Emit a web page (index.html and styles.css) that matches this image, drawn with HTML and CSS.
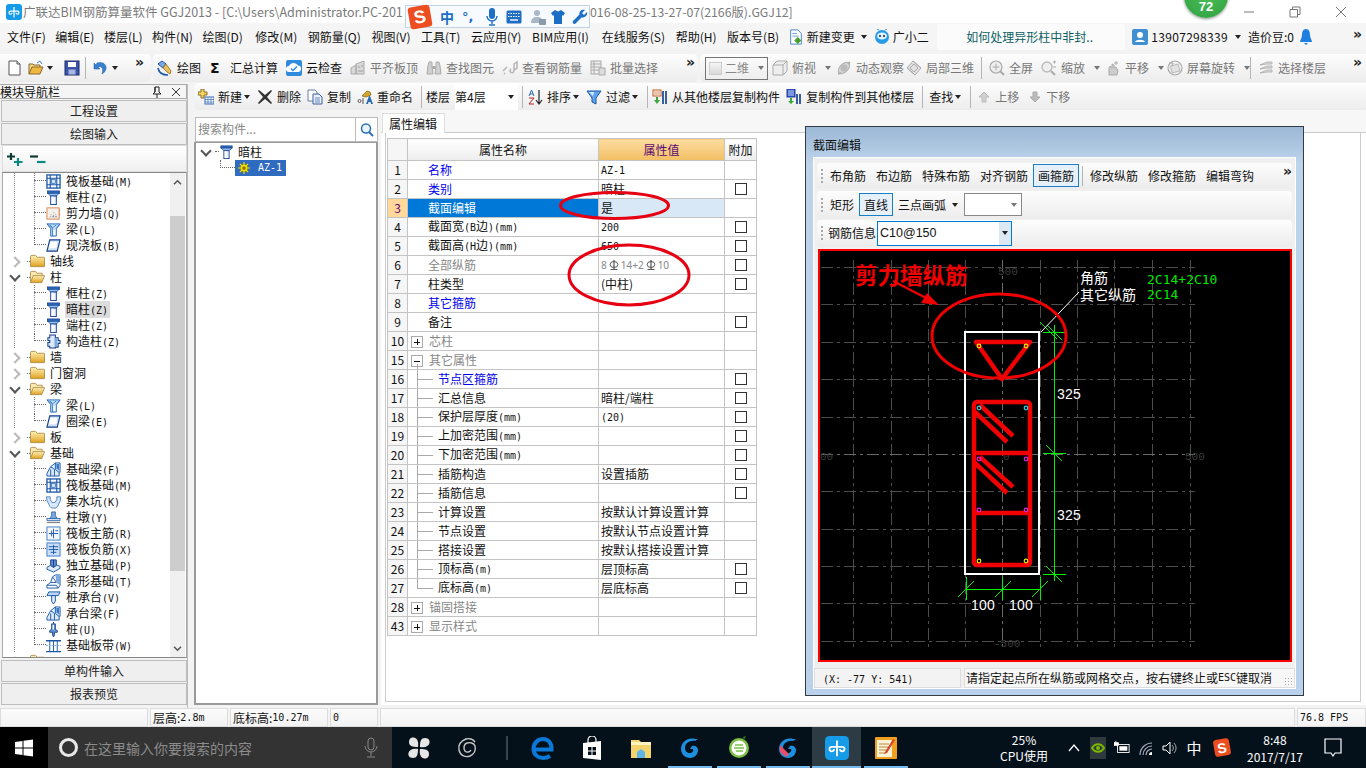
FILE: index.html
```html
<!DOCTYPE html>
<html lang="zh-CN">
<head>
<meta charset="utf-8">
<title>广联达BIM钢筋算量软件 GGJ2013</title>
<link rel="stylesheet" href="styles.css">
</head>
<body>
<svg class="sprite" xmlns="http://www.w3.org/2000/svg">
<defs>
<linearGradient id="gf" x1="0" y1="0" x2="0" y2="1"><stop offset="0" stop-color="#fff3b8"/><stop offset="1" stop-color="#e0a020"/></linearGradient>
<symbol id="i-col" viewBox="0 0 16 16"><rect x="1.5" y="1" width="13" height="2.5" fill="#2f6fc4" stroke="#143d8a" stroke-width=".8"/><path d="M2 3.5h12l-3 3H5z" fill="#8fbdf0" stroke="#143d8a" stroke-width=".8"/><rect x="5" y="6.5" width="6" height="9" fill="#e8f2ff" stroke="#143d8a"/><rect x="6" y="7" width="2" height="8" fill="#fff"/></symbol>
<symbol id="i-raft" viewBox="0 0 16 16"><rect x="1" y="1" width="14" height="14" fill="#fff" stroke="#1a57a6" stroke-width="1.4"/><path d="M4.5 1v14M11.5 1v14M1 4.5h14M1 11.5h14" stroke="#1a57a6" stroke-width="1.2"/><rect x="6" y="6" width="4" height="4" fill="#cfe0f5" stroke="#1a57a6" stroke-width=".7"/></symbol>
<symbol id="i-wall" viewBox="0 0 16 16"><rect x="1" y="2" width="13" height="12" fill="#f4f0ec" stroke="#d9814a"/><path d="M3 12l2-1 1 1 2-3 1 3 2-2 1 2zM5 8l1 1-1 1zM8 6l1 1-1 1zM10 8l1 1-1 1z" fill="#9a9a9a"/><path d="M14.500 4v2M14.500 8v2" stroke="#d9814a"/></symbol>
<symbol id="i-beam" viewBox="0 0 16 16"><path d="M1 2h14l-4 5v8H5V7z" fill="#bcdcf8" stroke="#2a6db5"/><path d="M1 2l6 5v8M11 7l4-5M4 3l3 3 4-3" fill="none" stroke="#2a6db5" stroke-width=".8"/><path d="M8 8h2v6H8z" fill="#fff"/></symbol>
<symbol id="i-slab" viewBox="0 0 16 16"><path d="M4 2h11l-3 12H1z" fill="#cfe2fa" stroke="#143d8a" stroke-width="1.2"/><path d="M5 4h7l-1 7H3z" fill="#fff"/></symbol>
<symbol id="i-gcol" viewBox="0 0 16 16"><path d="M4 1h6v3h3v3h2v3h-2v4h-3v1H4v-2H2V9h2V7H2V4h2z" fill="#dbe9fb" stroke="#143d8a" stroke-width="1.1"/><path d="M9 4h3v9H9z" fill="#7ea9de"/></symbol>
<symbol id="i-fbeam" viewBox="0 0 16 16"><path d="M1 15v-3l4-7 5-4h5v10h-1v4z" fill="#dbe9fb" stroke="#1a57a6"/><path d="M10 1v7l4 3M5 5l4 3v7M5 15V8" fill="none" stroke="#1a57a6"/><path d="M11 2h3v7l-3-2z" fill="#3a7cc8"/></symbol>
<symbol id="i-sump" viewBox="0 0 16 16"><path d="M.5 3h4v3l2 3h3l2-3V3h4v4l-3 6-2 2H6l-2-2-3-6z" fill="#cfe2fa" stroke="#2a6db5" stroke-width=".8"/><path d="M4 11h8M5 13h6" stroke="#fff" stroke-dasharray="1 1"/></symbol>
<symbol id="i-pier" viewBox="0 0 16 16"><path d="M6 2h4v4l2 3H4l2-3z" fill="#7ea9de" stroke="#1a57a6" stroke-width=".8"/><rect x="1" y="9" width="14" height="2" fill="#dbe9fb" stroke="#1a57a6" stroke-width=".8"/><rect x="1" y="12.500" width="14" height="1.500" fill="#888"/></symbol>
<symbol id="i-rmain" viewBox="0 0 16 16"><rect x="1" y="1" width="14" height="14" fill="#f2f7fe" stroke="#3a7cc8"/><path d="M3 8h10M8 3v10M6 5v6M10 5h3" stroke="#1a57a6" fill="none"/></symbol>
<symbol id="i-rneg" viewBox="0 0 16 16"><rect x="1" y="1" width="14" height="14" fill="#c9ddf6" stroke="#3a7cc8"/><path d="M3 8h10M3 5h10M8 3v10M5 11h6" stroke="#1a57a6" fill="none"/></symbol>
<symbol id="i-iso" viewBox="0 0 16 16"><path d="M1 10l7-4 7 3v2l-7 4-7-3z" fill="#dbe9fb" stroke="#1a57a6"/><path d="M5 2h6v6l-3 2-3-2z" fill="#5d90d2" stroke="#143d8a"/><path d="M8 2v8" stroke="#143d8a"/></symbol>
<symbol id="i-strip" viewBox="0 0 16 16"><path d="M1 15v-3l4-3 2-6 3-2h5v11l-2 3z" fill="#fff" stroke="#1a57a6"/><path d="M1 12h10l2 3M5 9h6M7 3l4 6" fill="none" stroke="#1a57a6"/><path d="M10 1h5v11l-4-3z" fill="#7ea9de"/></symbol>
<symbol id="i-cap" viewBox="0 0 16 16"><path d="M3 2h12l-2 4H1z" fill="#bcd6f5" stroke="#1a57a6"/><path d="M6 6h4v6l-2 3-2-3z" fill="#dbe9fb" stroke="#1a57a6"/></symbol>
<symbol id="i-pile" viewBox="0 0 16 16"><path d="M8 0v2M6 2h4v6l2 1v2H9v3l-1 2-1-2v-3H4V9l2-1z" fill="#5d90d2" stroke="#143d8a" stroke-width=".9"/><rect x="7" y="3" width="1.500" height="5" fill="#fff"/></symbol>
<symbol id="i-band" viewBox="0 0 16 16"><path d="M0 3h16M0 14.500h16" stroke="#1a57a6" stroke-width="1.500"/><path d="M4 3v11M8 3v11M12 3v11" stroke="#1a57a6"/><path d="M0 8h16" stroke="#7ea9de" stroke-dasharray="2 1"/></symbol>
<symbol id="i-fold" viewBox="0 0 16 14"><path d="M.5 2.500Q.5 1 2 1h4l1.500 2H15q.5 0 .5.5V13H.5z" fill="url(#gf)" stroke="#b09350"/></symbol>
<symbol id="i-open" viewBox="0 0 16 14"><path d="M.5 13V2.500Q.5 1 2 1h4l1.500 2H13v2" fill="#f7e6b0" stroke="#b09350"/><path d="M3.500 5.500H15.500L12.500 13H.5z" fill="url(#gf)" stroke="#b09350"/></symbol>
<symbol id="i-az" viewBox="0 0 16 16"><circle cx="8" cy="8" r="5" fill="#ffe500" stroke="#6a6000"/><path d="M8 0v16M0 8h16M2.500 2.500l11 11M13.500 2.500l-11 11" stroke="#ffe500" stroke-width="1.500"/><circle cx="8" cy="8" r="2.500" fill="#8a7a00"/></symbol>
<symbol id="i-doc" viewBox="0 0 16 16"><path d="M2 1h8l3 3v11H2z" fill="#fff" stroke="#555"/><path d="M10 1v3h3" fill="#ddd" stroke="#555"/></symbol>
<symbol id="i-openf" viewBox="0 0 16 16"><path d="M1 14V4h4l1 1h6v2" fill="#f2d78a" stroke="#8a6a2a"/><path d="M1 14l3-7h11l-3 7z" fill="#f0b840" stroke="#8a6a2a"/><path d="M9 3l3-2 2 3" fill="none" stroke="#3a7cc8"/></symbol>
<symbol id="i-save" viewBox="0 0 16 16"><rect x="1" y="1" width="14" height="14" fill="#3b53a8" stroke="#1d2a66"/><rect x="4" y="2" width="8" height="5" fill="#fff"/><rect x="4.500" y="9.500" width="7" height="5" fill="#a8b6e2"/></symbol>
<symbol id="i-undo" viewBox="0 0 16 16"><path d="M4 3c6-2 10 2 9 6-.6 2-2 4-4 5 1-3 1-6-1-7-1-.5-2-.3-3 .3L7 9H1V3l2 2z" fill="#3b80cf" stroke="#1d5aa0" stroke-width=".5"/></symbol>
<symbol id="i-draw" viewBox="0 0 16 16"><path d="M1 4l4-3 4 3-3 4z" fill="#7ea9de" stroke="#1a57a6"/><path d="M6 8l3-4 5 7-1 3-3-2z" fill="#e8c25a" stroke="#8a6a2a" stroke-width=".8"/><path d="M1 8c1 5 5 7 10 7" fill="none" stroke="#1a57a6" stroke-width="1.600"/></symbol>
<symbol id="i-cloud" viewBox="0 0 16 16"><rect width="16" height="16" rx="2" fill="#2f8be0"/><path d="M3 12a3 3 0 0 1 0-6 5 5 0 0 1 9-.5A3.300 3.300 0 0 1 12.500 12z" fill="#fff"/><path d="M5 8.500l2 2 4-4" fill="none" stroke="#2f8be0" stroke-width="1.500"/></symbol>
<symbol id="i-align" viewBox="0 0 16 16"><path d="M1 14V8l5-3v9zM6 14V4l8-3v13z" fill="#d8d8d8" stroke="#aaa"/><path d="M8 6h2v2H8zM11 5h2v2h-2zM8 10h5v2H8z" fill="#bbb"/></symbol>
<symbol id="i-bino" viewBox="0 0 16 16"><path d="M2 6l1-4h3v4l1 8H1zM14 6l-1-4h-3v4l-1 8h6z" fill="#d0d0d0" stroke="#aaa"/><rect x="6.500" y="6" width="3" height="3" fill="#aaa"/></symbol>
<symbol id="i-rlook" viewBox="0 0 16 16"><path d="M1 11l4-4M3 13l-1 1M12 4l3-2v6l-3 2zM9 9a2 2 0 1 0 3 2" fill="none" stroke="#b5b5b5" stroke-width="1.500"/></symbol>
<symbol id="i-batch" viewBox="0 0 16 16"><rect x="1" y="1" width="10" height="13" fill="#eee" stroke="#aaa"/><path d="M1 4h10M1 7h10M1 10h10M4 1v13" stroke="#aaa"/><path d="M9 8h6v7H9z" fill="#ddd" stroke="#aaa"/></symbol>
<symbol id="i-cube" viewBox="0 0 16 16"><path d="M1 5l4-4h10v10l-4 4H1z" fill="#eee" stroke="#aaa"/><path d="M1 5h10v10M11 5l4-4" fill="none" stroke="#aaa"/></symbol>
<symbol id="i-orbit" viewBox="0 0 16 16"><ellipse cx="8" cy="8" rx="7" ry="4" transform="rotate(-45 8 8)" fill="#d5d5d5" stroke="#b0b0b0"/><circle cx="8" cy="8" r="3.500" fill="#bbb"/><path d="M2 14l3-1M14 2l-2 2" stroke="#aaa" stroke-width="1.500"/></symbol>
<symbol id="i-l3d" viewBox="0 0 16 16"><path d="M1 8l6-7 8 7-6 7z" fill="#e2e2e2" stroke="#aaa"/><path d="M4 8l4-4 4 4-4 4zM1 8l8 7M7 1l8 7" fill="none" stroke="#aaa"/></symbol>
<symbol id="i-full" viewBox="0 0 16 16"><circle cx="7" cy="7" r="6" fill="#efefef" stroke="#aaa" stroke-width="1.200"/><path d="M3.500 7h7M7 3.500v7" stroke="#aaa"/><path d="M11 11l4 4" stroke="#aaa" stroke-width="2"/></symbol>
<symbol id="i-zoom" viewBox="0 0 16 16"><circle cx="6" cy="7" r="5" fill="#efefef" stroke="#bbb" stroke-width="1.400"/><path d="M10 11l4 4" stroke="#aaa" stroke-width="2"/><path d="M12 2h3M13.500.5v3M12 7h3" stroke="#aaa"/></symbol>
<symbol id="i-pan" viewBox="0 0 16 16"><path d="M4 15V8l1-2 2 2V4l2 1v3l2-1 1 2 1 1-1 5z" fill="#ccc" stroke="#aaa"/><path d="M11 1v4M9 3h4" stroke="#aaa"/></symbol>
<symbol id="i-rot" viewBox="0 0 16 16"><circle cx="8" cy="8" r="7" fill="#f0f0f0" stroke="#aaa" stroke-width="1.200"/><rect x="4" y="5" width="8" height="7" fill="#e2e2e2" stroke="#bbb" transform="rotate(-15 8 8)"/><path d="M2 3l4 0-1 3" fill="none" stroke="#aaa"/></symbol>
<symbol id="i-floors" viewBox="0 0 16 16"><path d="M2 5l7-3h5v2H9zM2 9l7-3h5v2H9zM2 13l7-3h5v2H9z" fill="#ddd" stroke="#aaa" stroke-width=".8"/></symbol>
<symbol id="i-new" viewBox="0 0 16 16"><path d="M3 0h3v3h3v3H6v3H3V6H0V3h3z" fill="#f4d65c" stroke="#8a6a2a"/><rect x="7" y="8" width="9" height="7" fill="#fff" stroke="#3a6db5"/><path d="M7 10.500h9M7 13h9M10 8v7M13 8v7" stroke="#3a6db5" stroke-width=".7"/></symbol>
<symbol id="i-del" viewBox="0 0 16 16"><path d="M2 1l6 5 6-5 1 1-5 6 5 6-1 1-6-5-6 5-1-1 5-6-5-6z" fill="#333"/></symbol>
<symbol id="i-copy" viewBox="0 0 16 16"><path d="M1 1h7l2 2v9H1z" fill="#fff" stroke="#6a7fa8"/><path d="M6 5h6l3 3v7H6z" fill="#e8effa" stroke="#3a5fa0"/><path d="M8 9h5M8 11h5M8 13h5" stroke="#3a5fa0" stroke-width=".7"/></symbol>
<symbol id="i-ren" viewBox="0 0 16 16"><path d="M5 7l5-5 3 1 1 3-5 2z" fill="#d4a72c" stroke="#7a5d10" stroke-width=".7"/><path d="M9 15l3-8h1l3 8h-2l-.5-2h-2l-.5 2z" fill="#2a6db5"/><path d="M1 12a1.500 1.500 0 1 0 3 0 1.500 1.500 0 1 0-3 0M6 9v6" fill="none" stroke="#555"/></symbol>
<symbol id="i-sort" viewBox="0 0 16 16"><path d="M12 1v13M9 11l3 4 3-4" fill="none" stroke="#222" stroke-width="1.200"/><path d="M2 7l2.500-6 2.500 6M3 5h3" fill="none" stroke="#2a6db5"/><path d="M2 9h5l-5 6h5" fill="none" stroke="#c02020"/></symbol>
<symbol id="i-filter" viewBox="0 0 16 16"><path d="M1 2h14l-5 7v6l-4-2V9z" fill="#63a4ea" stroke="#1a57a6"/><path d="M3 3h5l-1 4z" fill="#d7ecff"/></symbol>
<symbol id="i-cfrom" viewBox="0 0 16 16"><rect x="1" y="1" width="8" height="6" fill="#fff" stroke="#c05a20"/><path d="M2 3h6M2 5h6" stroke="#c05a20" stroke-width=".7"/><path d="M4 8v3H2l3 4 3-4H6V8z" fill="#3aa83a"/><path d="M10 2h2v13h-2zM13 2h2v13h-2z" fill="#3a5fa0"/></symbol>
<symbol id="i-cto" viewBox="0 0 16 16"><rect x="1" y="0" width="8" height="8" fill="#3a5fd0" stroke="#1a3a90"/><path d="M2 2h6M2 4h6M2 6h6" stroke="#fff" stroke-width=".7"/><path d="M4 9v3H2l3 3 3-3H6V9z" fill="#3aa83a"/><path d="M10 5h2v10h-2zM13 5h2v10h-2z" fill="#3a5fa0"/></symbol>
<symbol id="i-up" viewBox="0 0 12 12"><path d="M6 1l5 5H8v5H4V6H1z" fill="#d0d0d0" stroke="#bbb"/></symbol>
<symbol id="i-down" viewBox="0 0 12 12"><path d="M6 11L1 6h3V1h4v5h3z" fill="#bbb" stroke="#aaa"/></symbol>
<symbol id="i-logo" viewBox="0 0 16 16"><rect width="16" height="16" rx="3" fill="#159be8"/><path d="M8 3v10.500M8 7.200H4.500a1.500 1.500 0 1 0 1.500 1.500M8 7.200h3.500a1.500 1.500 0 1 1-1.500 1.500" fill="none" stroke="#fff" stroke-width="1.200"/></symbol>
<symbol id="i-mdoc" viewBox="0 0 16 18"><path d="M2 1h8l4 4v12H2z" fill="#fff" stroke="#3a7cc8"/><path d="M4 5h5M4 8h7" stroke="#3a7cc8" stroke-width=".8"/><path d="M10 9l4 4-4 4-4-4z" fill="#4aa02c"/></symbol>
<symbol id="i-xiao" viewBox="0 0 16 16"><circle cx="8" cy="8" r="7" fill="#2a9be6"/><ellipse cx="8" cy="7" rx="5" ry="3.500" fill="#dff2ff"/><circle cx="6" cy="7" r="1" fill="#123"/><circle cx="10" cy="7" r="1" fill="#123"/><path d="M5 1L3 0M11 1l2-1" stroke="#2a9be6"/></symbol>
<symbol id="i-user" viewBox="0 0 16 16"><rect width="16" height="16" rx="2" fill="#3f8fd2"/><circle cx="8" cy="6" r="3" fill="#fff"/><path d="M3 13c1-3 9-3 10 0z" fill="#fff"/></symbol>
<symbol id="i-bell" viewBox="0 0 12 16"><path d="M6 0c3 0 4 3 4 6 0 3 2 5 2 7H0c0-2 2-4 2-7 0-3 1-6 4-6z" fill="#1f7fe0"/><path d="M4 14h4l-2 2z" fill="#1f7fe0"/></symbol>
<symbol id="i-search" viewBox="0 0 16 16"><circle cx="7" cy="6.500" r="4.500" fill="#e8f3ff" stroke="#2a6db5" stroke-width="1.500"/><path d="M10 10l4 4" stroke="#2a6db5" stroke-width="2"/></symbol>
<symbol id="i-rb" viewBox="0 0 10 10"><ellipse cx="5" cy="4.500" rx="3.800" ry="3" fill="none" stroke="#555"/><path d="M5 0v9M1.500 9.500h7" stroke="#555" stroke-width="1.200"/></symbol>
<symbol id="i-ime-mic" viewBox="0 0 12 18"><rect x="3" y="0" width="6" height="11" rx="3" fill="#1c6fc4"/><path d="M1 8a5 5 0 0 0 10 0M6 13v3M3 17h6" fill="none" stroke="#1c6fc4" stroke-width="1.400"/></symbol>
<symbol id="i-ime-kb" viewBox="0 0 16 14"><rect x=".5" y=".5" width="15" height="13" rx="1.500" fill="#1c6fc4"/><path d="M2 3.500h12M2 6.500h12" stroke="#fff" stroke-dasharray="1.500 1" /><path d="M4 10h8" stroke="#fff" stroke-width="1.400"/></symbol>
<symbol id="i-ime-user" viewBox="0 0 16 16"><circle cx="7" cy="4" r="3" fill="#a9b7c6"/><path d="M1 14c0-5 3-6 6-6s6 1 6 6z" fill="#a9b7c6"/><rect x="9" y="10" width="7" height="6" rx="1" fill="#8b9aa9"/></symbol>
<symbol id="i-ime-shirt" viewBox="0 0 14 14"><path d="M4 0l3 1.500L10 0l4 3-2 3-1-1v9H3V5L2 6 0 3z" fill="#1c6fc4"/></symbol>
<symbol id="i-ime-wr" viewBox="0 0 16 16"><path d="M15 3l-3 3-2-2 3-3c-3-1-6 1-5.500 4.500L1 12c-1 1 0 3 2 3l6.500-6.500C13 9 16 6 15 3z" fill="#1c6fc4"/></symbol>
<symbol id="i-win" viewBox="0 0 18 18"><path d="M0 3l7.500-1v6.500H0zM8.500 1.800L18 .5v8H8.500zM0 9.500h7.500V16L0 15zM8.500 9.500H18v8l-9.500-1.300z" fill="#fff"/></symbol>
<symbol id="i-mic" viewBox="0 0 14 22"><rect x="4" y="1" width="6" height="12" rx="3" fill="none" stroke="#888"/><path d="M1 9a6 6 0 0 0 12 0M7 15v4M3 20h8" fill="none" stroke="#888"/></symbol>
<symbol id="i-pin" viewBox="0 0 24 24"><path d="M11 11C5 11 2 10 2 6s3-5 5-4.500c3 .7 5 4 4 9.500zM13 11c0-6 1-9 5-9s5 3 4.500 5c-.7 3-4 5-9.500 4zM13 13c6 0 9 1 9 5s-3 5-5 4.500c-3-.7-5-4-4-9.500zM11 13c0 6-1 9-5 9s-5-3-4.500-5c.7-3 4-5 9.500-4z" fill="#e6e6e6"/></symbol>
<symbol id="i-swirl" viewBox="0 0 24 24"><path d="M19 6c-2-3-6-4-9-3C5 5 2 9 3 14c1 5 6 8 11 6 4-2 6-6 5-10-1-3-5-4-8-3-3 1-4 5-2 8 2 2 5 1 6-1" fill="none" stroke="#c8c8c8" stroke-width="1.400"/></symbol>
<symbol id="i-edge" viewBox="0 0 24 24"><path d="M3 13.500h17.500c.5-6-3-10.500-8.500-10.500-5 0-9.500 4-9.500 10 0 6 5 9 9.500 9 2.500 0 5-.7 7-2" fill="none" stroke="#0a78d7" stroke-width="4"/></symbol>
<symbol id="i-store" viewBox="0 0 24 24"><path d="M3 7l18-2v19L3 22z" fill="#fff"/><path d="M8 7V4a4 4 0 0 1 8 0v3" fill="none" stroke="#fff" stroke-width="1.200"/><path d="M8 11h3.500v3.500H8zM12.500 11H16v3.500h-3.500zM8 15.500h3.500V19H8zM12.500 15.500H16V19h-3.500z" fill="#04111a"/></symbol>
<symbol id="i-folder" viewBox="0 0 24 24"><path d="M2 4h8l2 2h10v16H2z" fill="#f3d36b"/><rect x="2" y="6" width="20" height="3" fill="#fff3c0"/><path d="M8 22v-6l4-3 4 3v6z" fill="#5cb4e8"/></symbol>
<symbol id="i-gapp" viewBox="0 0 24 24"><path d="M17 3C10 1 3 6 3 13c0 5 4 9 9 9s8-4 8-8c0-3-3-5-6-4l-2 3 3 0c1 2-1 4-3 4-3 0-5-2-5-5 0-5 5-8 10-7l3-2z" fill="#1d8fe0"/></symbol>
<symbol id="i-gr" viewBox="0 0 24 24"><circle cx="12" cy="12" r="10" fill="#7bc043"/><circle cx="12" cy="12" r="7.500" fill="#fff"/><path d="M7 12h10M8 9h8M9 15h7" stroke="#7bc043" stroke-width="1.500"/><path d="M16 1l3-1-2 4z" fill="#2a7a20"/></symbol>
<symbol id="i-gred" viewBox="0 0 24 24"><path d="M17 3C10 1 3 6 3 13c0 5 4 9 9 9s8-4 8-8c0-3-3-5-6-4l-2 3 3 0c1 2-1 4-3 4-3 0-5-2-5-5 0-5 5-8 10-7l3-2z" fill="#1d8fe0"/><path d="M4 9l9 9-3 3-6-5z" fill="#e8506a"/></symbol>
<symbol id="i-note" viewBox="0 0 24 24"><rect x="1" y="1" width="22" height="22" rx="1" fill="#f0a01e"/><rect x="3" y="4" width="15" height="17" fill="#fbf3d8"/><path d="M5 8h10M5 11h10M5 14h8M5 17h6" stroke="#b58a3a"/><path d="M11 16l8-13 2 1-8 13-3 1z" fill="#d8452a"/></symbol>
<symbol id="i-nv" viewBox="0 0 16 22"><rect width="16" height="22" fill="#2e3a3e"/><path d="M2 11c3-5 9-5 12 0-3 5-9 5-12 0z" fill="none" stroke="#7cb800" stroke-width="2"/><circle cx="8" cy="11" r="2" fill="#7cb800"/></symbol>
<symbol id="i-batt" viewBox="0 0 18 16"><rect x="4" y="4" width="13" height="9" fill="none" stroke="#fff"/><rect x="6" y="6" width="9" height="5" fill="#fff"/><path d="M0 2h5v3H0zM2 0v2" stroke="#fff" fill="#fff"/></symbol>
<symbol id="i-wifi" viewBox="0 0 16 16"><path d="M2 15a12 12 0 0 1 12-12M5 15a9 9 0 0 1 9-9M8 15a6 6 0 0 1 6-6" fill="none" stroke="#aab" stroke-width="1.200"/><path d="M11 15a3 3 0 0 1 3-3v3z" fill="#fff"/></symbol>
<symbol id="i-vol" viewBox="0 0 16 16"><path d="M1 6h3l4-4v12l-4-4H1z" fill="none" stroke="#fff"/><path d="M10 5a4 4 0 0 1 0 6M12 3a7 7 0 0 1 0 10" fill="none" stroke="#aaa"/></symbol>
<symbol id="i-note2" viewBox="0 0 18 20"><path d="M1 1h16v14h-6l-2 3-2-3H1z" fill="none" stroke="#fff" stroke-width="1.200"/></symbol>
</defs>
</svg>

<header class="titlebar">
  <svg class="ic16 tlogo"><use href="#i-logo"/></svg>
  <span class="title-a">广联达BIM钢筋算量软件 GGJ2013 - [C:\Users\Administrator.PC-201</span>
  <span class="title-b">016-08-25-13-27-07(2166版).GGJ12]</span>
  <div class="winctl">
    <svg class="wc" viewBox="0 0 12 12"><path d="M1 6h10"/></svg>
    <svg class="wc" viewBox="0 0 12 12"><path d="M1 3.500h7.500V11H1zM3.500 3.500V1H11v7.500H8.500"/></svg>
    <svg class="wc" viewBox="0 0 12 12"><path d="M1 1l10 10M11 1L1 11"/></svg>
  </div>
</header>

<nav class="menubar">
  <span class="m">文件(F)</span><span class="m">编辑(E)</span><span class="m">楼层(L)</span><span class="m">构件(N)</span><span class="m">绘图(D)</span><span class="m">修改(M)</span><span class="m">钢筋量(Q)</span><span class="m">视图(V)</span><span class="m">工具(T)</span><span class="m">云应用(Y)</span><span class="m">BIM应用(I)</span><span class="m">在线服务(S)</span><span class="m">帮助(H)</span><span class="m">版本号(B)</span>
  <svg class="ic16 mi mi-a"><use href="#i-mdoc"/></svg><span class="m bdd">新建变更</span><i class="dd"></i>
  <svg class="ic16 mi2"><use href="#i-xiao"/></svg><span class="m">广小二</span>
  <span class="ask">如何处理异形柱中非封..</span>
  <svg class="ic16 mi"><use href="#i-user"/></svg><span class="m phone">13907298339</span><i class="dd"></i><span class="m bean">造价豆:0</span>
  <svg class="bell"><use href="#i-bell"/></svg>
  <span class="more more-end">»</span>
</nav>

<div class="tb1">
  <div class="grp g1">
    <svg class="ic16"><use href="#i-doc"/></svg>
    <svg class="ic16 gap5"><use href="#i-openf"/></svg><i class="dd"></i>
    <svg class="ic16 gap10"><use href="#i-save"/></svg>
    <b class="sep"></b>
    <svg class="ic16"><use href="#i-undo"/></svg><i class="dd"></i>
    <span class="more">»</span>
  </div>
  <div class="grp g2">
    <span class="t"><svg class="ic16"><use href="#i-draw"/></svg>绘图</span>
    <span class="t"><span class="sigma">Σ</span>汇总计算</span>
    <span class="t"><svg class="ic16"><use href="#i-cloud"/></svg>云检查</span>
    <span class="t off"><svg class="ic16"><use href="#i-align"/></svg>平齐板顶</span>
    <span class="t off"><svg class="ic16"><use href="#i-bino"/></svg>查找图元</span>
    <span class="t off"><svg class="ic16"><use href="#i-rlook"/></svg>查看钢筋量</span>
    <span class="t off"><svg class="ic16"><use href="#i-batch"/></svg>批量选择</span>
    <span class="more">»</span>
  </div>
  <div class="grp g3">
    <span class="combo2d"><b class="sq"></b>二维<i class="dd gr"></i></span>
    <span class="t off mr4"><svg class="ic16"><use href="#i-cube"/></svg>俯视<i class="dd gr"></i></span>
    <span class="t off mr2"><svg class="ic16"><use href="#i-orbit"/></svg>动态观察</span>
    <span class="t off"><svg class="ic16"><use href="#i-l3d"/></svg>局部三维</span>
    <b class="sep"></b>
    <span class="t off"><svg class="ic16"><use href="#i-full"/></svg>全屏</span>
    <span class="t off mr4"><svg class="ic16"><use href="#i-zoom"/></svg>缩放<i class="dd gr"></i></span>
    <span class="t off mr2"><svg class="ic16"><use href="#i-pan"/></svg>平移<i class="dd gr"></i></span>
    <span class="t off mr0"><svg class="ic16"><use href="#i-rot"/></svg>屏幕旋转<i class="dd gr"></i></span>
    <b class="sep"></b>
    <span class="t off"><svg class="ic16"><use href="#i-floors"/></svg>选择楼层</span>
    <span class="more">»</span>
  </div>
</div>

<div class="workspace">
  <aside class="nav">
    <div class="navhead"><span>模块导航栏</span><span class="navbtns"><svg class="pin" viewBox="0 0 10 12"><path d="M3 1h4v5l2 2H1l2-2zM5 8v4M3 1v5" fill="none" stroke="#222"/></svg><svg class="pin" viewBox="0 0 10 12"><path d="M1 2l8 8M9 2l-8 8" stroke="#333"/></svg></span></div>
    <div class="nbtn">工程设置</div>
    <div class="nbtn">绘图输入</div>
    <div class="xbar">
      <svg class="xi" viewBox="0 0 16 14"><path d="M4 1v7M0 4.500h8" stroke="#0f3b35" stroke-width="2.200"/><path d="M11 6v8M7 10h8.500" stroke="#0a8a80" stroke-width="2.200"/></svg>
      <svg class="xi" viewBox="0 0 16 14"><path d="M0 4.500h8" stroke="#0f3b35" stroke-width="2.200"/><path d="M7 10h8.500" stroke="#0a8a80" stroke-width="2.200"/></svg>
    </div>
    <div class="treebox">
      <div class="tree">
        <div class="c"><b class="k"></b><svg class="ic14"><use href="#i-raft"/></svg><span>筏板基础<i class="l">(M)</i></span></div>
        <div class="c"><b class="k"></b><svg class="ic14"><use href="#i-col"/></svg><span>框柱<i class="l">(Z)</i></span></div>
        <div class="c"><b class="k"></b><svg class="ic14"><use href="#i-wall"/></svg><span>剪力墙<i class="l">(Q)</i></span></div>
        <div class="c"><b class="k"></b><svg class="ic14"><use href="#i-beam"/></svg><span>梁<i class="l">(L)</i></span></div>
        <div class="c last"><b class="k"></b><svg class="ic14"><use href="#i-slab"/></svg><span>现浇板<i class="l">(B)</i></span></div>
        <div class="f"><i class="chev"></i><b class="k2"></b><svg class="ic15"><use href="#i-fold"/></svg><span>轴线</span></div>
        <div class="f"><i class="chev open"></i><b class="k2"></b><svg class="ic15"><use href="#i-open"/></svg><span>柱</span></div>
        <div class="c"><b class="k"></b><svg class="ic14"><use href="#i-col"/></svg><span>框柱<i class="l">(Z)</i></span></div>
        <div class="c"><b class="k"></b><svg class="ic14"><use href="#i-col"/></svg><span class="sel">暗柱<i class="l">(Z)</i></span></div>
        <div class="c"><b class="k"></b><svg class="ic14"><use href="#i-col"/></svg><span>端柱<i class="l">(Z)</i></span></div>
        <div class="c last"><b class="k"></b><svg class="ic14"><use href="#i-gcol"/></svg><span>构造柱<i class="l">(Z)</i></span></div>
        <div class="f"><i class="chev"></i><b class="k2"></b><svg class="ic15"><use href="#i-fold"/></svg><span>墙</span></div>
        <div class="f"><i class="chev"></i><b class="k2"></b><svg class="ic15"><use href="#i-fold"/></svg><span>门窗洞</span></div>
        <div class="f"><i class="chev open"></i><b class="k2"></b><svg class="ic15"><use href="#i-open"/></svg><span>梁</span></div>
        <div class="c"><b class="k"></b><svg class="ic14"><use href="#i-beam"/></svg><span>梁<i class="l">(L)</i></span></div>
        <div class="c last"><b class="k"></b><svg class="ic14"><use href="#i-slab"/></svg><span>圈梁<i class="l">(E)</i></span></div>
        <div class="f"><i class="chev"></i><b class="k2"></b><svg class="ic15"><use href="#i-fold"/></svg><span>板</span></div>
        <div class="f"><i class="chev open"></i><b class="k2"></b><svg class="ic15"><use href="#i-open"/></svg><span>基础</span></div>
        <div class="c"><b class="k"></b><svg class="ic14"><use href="#i-fbeam"/></svg><span>基础梁<i class="l">(F)</i></span></div>
        <div class="c"><b class="k"></b><svg class="ic14"><use href="#i-raft"/></svg><span>筏板基础<i class="l">(M)</i></span></div>
        <div class="c"><b class="k"></b><svg class="ic14"><use href="#i-sump"/></svg><span>集水坑<i class="l">(K)</i></span></div>
        <div class="c"><b class="k"></b><svg class="ic14"><use href="#i-pier"/></svg><span>柱墩<i class="l">(Y)</i></span></div>
        <div class="c"><b class="k"></b><svg class="ic14"><use href="#i-rmain"/></svg><span>筏板主筋<i class="l">(R)</i></span></div>
        <div class="c"><b class="k"></b><svg class="ic14"><use href="#i-rneg"/></svg><span>筏板负筋<i class="l">(X)</i></span></div>
        <div class="c"><b class="k"></b><svg class="ic14"><use href="#i-iso"/></svg><span>独立基础<i class="l">(P)</i></span></div>
        <div class="c"><b class="k"></b><svg class="ic14"><use href="#i-strip"/></svg><span>条形基础<i class="l">(T)</i></span></div>
        <div class="c"><b class="k"></b><svg class="ic14"><use href="#i-cap"/></svg><span>桩承台<i class="l">(V)</i></span></div>
        <div class="c"><b class="k"></b><svg class="ic14"><use href="#i-fbeam"/></svg><span>承台梁<i class="l">(F)</i></span></div>
        <div class="c"><b class="k"></b><svg class="ic14"><use href="#i-pile"/></svg><span>桩<i class="l">(U)</i></span></div>
        <div class="c last"><b class="k"></b><svg class="ic14"><use href="#i-band"/></svg><span>基础板带<i class="l">(W)</i></span></div>
        <div class="f"><i class="chev"></i><b class="k2"></b><svg class="ic15"><use href="#i-fold"/></svg></div>
      </div>
      <div class="vscroll">
        <span class="sbtn"><svg class="sbi" viewBox="0 0 10 8"><path d="M1 6l4-4 4 4" fill="none" stroke="#555" stroke-width="1.800"/></svg></span><b class="sb-top"></b><b class="sb-thumb"></b><b class="sb-rest"></b><span class="sbtn"><svg class="sbi" viewBox="0 0 10 8"><path d="M1 2l4 4 4-4" fill="none" stroke="#555" stroke-width="1.800"/></svg></span>
      </div>
    </div>
    <div class="nbtn nbtn-b">单构件输入</div>
    <div class="nbtn nbtn-c">报表预览</div>
  </aside>

  <main class="right">
    <div class="tb2">
      <span class="t"><svg class="ic16"><use href="#i-new"/></svg>新建<i class="dd"></i></span>
      <span class="t"><svg class="ic16"><use href="#i-del"/></svg>删除</span>
      <span class="t"><svg class="ic16"><use href="#i-copy"/></svg>复制</span>
      <span class="t"><svg class="ic16"><use href="#i-ren"/></svg>重命名</span>
      <b class="sep"></b>
      <span class="floorlab">楼层</span>
      <span class="floorcombo">第4层<i class="dd"></i></span>
      <b class="sep"></b>
      <span class="t"><svg class="ic16"><use href="#i-sort"/></svg>排序<i class="dd"></i></span>
      <span class="t"><svg class="ic16"><use href="#i-filter"/></svg>过滤<i class="dd"></i></span>
      <b class="sep"></b>
      <span class="t"><svg class="ic16"><use href="#i-cfrom"/></svg>从其他楼层复制构件</span>
      <span class="t"><svg class="ic16"><use href="#i-cto"/></svg>复制构件到其他楼层</span>
      <b class="sep"></b>
      <span class="t find">查找<i class="dd"></i></span>
      <b class="sep"></b>
      <span class="t off first-off"><svg class="ic12"><use href="#i-up"/></svg>上移</span>
      <span class="t off"><svg class="ic12"><use href="#i-down"/></svg>下移</span>
    </div>
    <div class="panes">
      <section class="list">
        <div class="searchrow"><span class="searchbox">搜索构件...</span><span class="searchbtn"><svg class="ic16"><use href="#i-search"/></svg></span></div>
        <div class="listtree">
          <div class="lroot"><i class="chev open"></i><b class="k3"></b><svg class="ic15"><use href="#i-col"/></svg><span>暗柱</span></div>
          <div class="lchild"><b class="k4"></b><span class="azsel"><svg class="ic12"><use href="#i-az"/></svg><i class="l az">AZ-1</i></span></div>
        </div>
      </section>
      <section class="props">
        <div class="tabs"><span class="tab">属性编辑</span></div>
        <div class="sheet">
          <table class="grid">
            <colgroup><col class="c1"><col class="c2"><col class="c3"><col class="c4"></colgroup>
            <thead><tr><th class="num"></th><th>属性名称</th><th class="hval">属性值</th><th>附加</th></tr></thead>
            <tbody>
              <tr><td class="num">1</td><td class="n blue">名称</td><td class="v"><i class="l">AZ-1</i></td><td></td></tr>
              <tr><td class="num">2</td><td class="n blue">类别</td><td class="v">暗柱</td><td class="x"><b class="cb"></b></td></tr>
              <tr class="selrow"><td class="num">3</td><td class="n">截面编辑</td><td class="v">是</td><td></td></tr>
              <tr><td class="num">4</td><td class="n">截面宽<i class="l">(B</i>边<i class="l">)(mm)</i></td><td class="v"><i class="l">200</i></td><td class="x"><b class="cb"></b></td></tr>
              <tr><td class="num">5</td><td class="n">截面高<i class="l">(H</i>边<i class="l">)(mm)</i></td><td class="v"><i class="l">650</i></td><td class="x"><b class="cb"></b></td></tr>
              <tr><td class="num">6</td><td class="n gray">全部纵筋</td><td class="v gray rbv">8<svg class="rb"><use href="#i-rb"/></svg>14+2<svg class="rb"><use href="#i-rb"/></svg>10</td><td class="x"><b class="cb"></b></td></tr>
              <tr><td class="num">7</td><td class="n">柱类型</td><td class="v">(中柱)</td><td class="x"><b class="cb"></b></td></tr>
              <tr><td class="num">8</td><td class="n blue">其它箍筋</td><td class="v"></td><td></td></tr>
              <tr><td class="num">9</td><td class="n">备注</td><td class="v"></td><td class="x"><b class="cb"></b></td></tr>
              <tr><td class="num">10</td><td class="g gray"><b class="pm plus"></b>芯柱</td><td class="v"></td><td></td></tr>
              <tr><td class="num">15</td><td class="g gray tr0"><b class="pm minus"></b>其它属性</td><td class="v"></td><td></td></tr>
              <tr><td class="num">16</td><td class="s blue">节点区箍筋</td><td class="v"></td><td class="x"><b class="cb"></b></td></tr>
              <tr><td class="num">17</td><td class="s">汇总信息</td><td class="v">暗柱/端柱</td><td class="x"><b class="cb"></b></td></tr>
              <tr><td class="num">18</td><td class="s">保护层厚度<i class="l">(mm)</i></td><td class="v"><i class="l">(20)</i></td><td class="x"><b class="cb"></b></td></tr>
              <tr><td class="num">19</td><td class="s">上加密范围<i class="l">(mm)</i></td><td class="v"></td><td class="x"><b class="cb"></b></td></tr>
              <tr><td class="num">20</td><td class="s">下加密范围<i class="l">(mm)</i></td><td class="v"></td><td class="x"><b class="cb"></b></td></tr>
              <tr><td class="num">21</td><td class="s">插筋构造</td><td class="v">设置插筋</td><td class="x"><b class="cb"></b></td></tr>
              <tr><td class="num">22</td><td class="s">插筋信息</td><td class="v"></td><td class="x"><b class="cb"></b></td></tr>
              <tr><td class="num">23</td><td class="s">计算设置</td><td class="v">按默认计算设置计算</td><td></td></tr>
              <tr><td class="num">24</td><td class="s">节点设置</td><td class="v">按默认节点设置计算</td><td></td></tr>
              <tr><td class="num">25</td><td class="s">搭接设置</td><td class="v">按默认搭接设置计算</td><td></td></tr>
              <tr><td class="num">26</td><td class="s">顶标高<i class="l">(m)</i></td><td class="v">层顶标高</td><td class="x"><b class="cb"></b></td></tr>
              <tr><td class="num">27</td><td class="s send">底标高<i class="l">(m)</i></td><td class="v">层底标高</td><td class="x"><b class="cb"></b></td></tr>
              <tr><td class="num">28</td><td class="g gray"><b class="pm plus"></b>锚固搭接</td><td class="v"></td><td></td></tr>
              <tr><td class="num">43</td><td class="g gray"><b class="pm plus"></b>显示样式</td><td class="v"></td><td></td></tr>
            </tbody>
          </table>
        </div>
      </section>
    </div>
  </main>
</div>

<footer class="statusbar">
  <span class="st st1"></span>
  <span class="st st2">层高:<i class="l">2.8m</i></span>
  <span class="st st3">底标高:<i class="l">10.27m</i></span>
  <span class="st st4"><i class="l">0</i></span>
  <span class="st st5"></span>
  <span class="st st6"><i class="l">76.8 FPS</i></span>
</footer>

<div class="taskbar">
  <span class="start"><svg class="tk18"><use href="#i-win"/></svg></span>
  <span class="tsearch"><b class="cortana"></b><span class="tstext">在这里输入你要搜索的内容</span><svg class="tmic"><use href="#i-mic"/></svg></span>
  <span class="tpins">
    <span class="tk"><svg class="tk24"><use href="#i-pin"/></svg></span>
    <span class="tk"><svg class="tk24"><use href="#i-swirl"/></svg></span>
    <b class="tsep"></b>
    <span class="tk"><svg class="tk24"><use href="#i-edge"/></svg></span>
    <span class="tk"><svg class="tk24"><use href="#i-store"/></svg></span>
    <span class="tk"><svg class="tk24"><use href="#i-folder"/></svg></span>
    <span class="tk run"><svg class="tk24"><use href="#i-gapp"/></svg></span>
    <span class="tk run"><svg class="tk24"><use href="#i-gr"/></svg></span>
    <span class="tk run"><svg class="tk24"><use href="#i-gred"/></svg></span>
    <span class="tk run act"><svg class="tk24"><use href="#i-logo"/></svg></span>
    <span class="tk run"><svg class="tk24"><use href="#i-note"/></svg></span>
  </span>
  <span class="tray">
    <span class="cpu"><span class="cpu1">25%</span><span>CPU使用</span></span>
    <span class="tc tc0"><svg class="tc16" viewBox="0 0 16 16"><path d="M3 11l5-6 5 6" fill="none" stroke="#fff" stroke-width="1.300"/></svg></span>
    <span class="tc"><svg class="tcnv"><use href="#i-nv"/></svg></span>
    <span class="tc"><svg class="tc16"><use href="#i-batt"/></svg></span>
    <span class="tc"><svg class="tc16"><use href="#i-wifi"/></svg></span>
    <span class="tc"><svg class="tc16"><use href="#i-vol"/></svg></span>
    <span class="tc imez">中</span>
    <span class="tc tcs"><span class="sogou small">S</span></span>
    <span class="clock"><span>8:48</span><span>2017/7/17</span></span>
    <span class="notif"><svg class="tnote"><use href="#i-note2"/></svg></span>
  </span>
</div>

<!-- floating items over the main window -->
<div class="imebar">
  <span class="sogou">S</span>
  <span class="imez2">中</span>
  <span class="imep">°,</span>
  <svg class="imi1"><use href="#i-ime-mic"/></svg>
  <svg class="imi2"><use href="#i-ime-kb"/></svg>
  <svg class="imi3"><use href="#i-ime-user"/></svg>
  <svg class="imi4"><use href="#i-ime-shirt"/></svg>
  <svg class="imi5"><use href="#i-ime-wr"/></svg>
</div>

<div class="ball">72</div>

<svg class="marks" viewBox="0 0 1366 768">
  <ellipse cx="614.500" cy="205.500" rx="54" ry="13"/>
  <ellipse cx="629" cy="275" rx="60" ry="30"/>
</svg>

<section class="dialog">
  <div class="dtitle">截面编辑</div>
  <div class="dbody">
    <div class="dbar dbar1">
      <b class="grip"></b>
      <span class="db">布角筋</span><span class="db">布边筋</span><span class="db">特殊布筋</span><span class="db">对齐钢筋</span><span class="db on">画箍筋</span>
      <b class="sep dsep"></b>
      <span class="db">修改纵筋</span><span class="db">修改箍筋</span><span class="db">编辑弯钩</span>
      <span class="more">»</span>
    </div>
    <div class="dbar dbar2">
      <b class="grip"></b>
      <span class="db">矩形</span><span class="db on">直线</span><span class="db arc">三点画弧<i class="dd"></i></span>
      <span class="dcombo"><i class="dd gr"></i></span>
    </div>
    <div class="dbar dbar3">
      <b class="grip"></b>
      <span class="lbl">钢筋信息</span>
      <span class="rcombo"><span class="rtext">C10@150</span><span class="rbtn"><i class="dd"></i></span></span>
    </div>
    <div class="canvas">
      <svg class="draw" viewBox="820 251 469 409">
        <path class="gridl" d="M821 267H1195M821 304.500H1195M821 342H1195M821 379.500H1195M821 417H1195M821 491.500H1195M821 529H1195M821 566H1195M821 603.500H1195M821 641H1195M853 260V650M891 260V650M928 260V650M965 260V650M1040 260V650M1077 260V650M1114 260V650M1152 260V650M1190 260V650"/>
        <path class="gridc" d="M821 454H1195M1002 260V650"/>
        <text class="axis" x="998" y="275">500</text>
        <text class="axis" x="820" y="460">00</text>
        <text class="axis" x="1185" y="460">500</text>
        <text class="axis" x="1003" y="460">0</text>
        <text class="axis" x="994" y="647">-500</text>
        <rect class="wall" x="965" y="332" width="74" height="242"/>
        <g class="hoop">
          <path d="M976 342H1030L1002 379Z"/>
          <rect x="974" y="402" width="56" height="163" rx="3"/>
          <path d="M975 453H1030M975 513H1030M980 405L1013 436M975 412L1007 442M980 457L1013 487M975 463L1007 493"/>
        </g>
        <g class="dot dy"><circle cx="979" cy="346" r="1.800"/><circle cx="1026" cy="346" r="1.800"/><circle cx="979" cy="561" r="1.800"/><circle cx="1026" cy="561" r="1.800"/></g>
        <g class="dot dc"><circle cx="979" cy="408" r="1.800"/><circle cx="1026" cy="408" r="1.800"/></g>
        <g class="dot dm"><circle cx="979" cy="459" r="1.800"/><circle cx="1026" cy="459" r="1.800"/><circle cx="979" cy="510" r="1.800"/><circle cx="1026" cy="510" r="1.800"/></g>
        <path class="dim" d="M1054 325V581M1043 332H1066M1043 453H1066M1043 574H1066M1047 325L1062 340M1046 445L1062 461M1046 566L1062 582M965 589H1040M966 577V600M1002 577V600M1040 577V600M958 597L974 581M995 597L1011 581M1032 597L1048 581M1040 322L1057 339"/>
        <path class="lead" d="M1041 332L1079 292"/>
        <text class="dimt" x="1057" y="399">325</text>
        <text class="dimt" x="1057" y="520">325</text>
        <text class="dimt" x="971" y="610">100</text>
        <text class="dimt" x="1009" y="610">100</text>
        <text class="cn" x="1080" y="283">角筋</text>
        <text class="cn" x="1080" y="300">其它纵筋</text>
        <text class="gn" x="1147" y="284">2C14+2C10</text>
        <text class="gn" x="1147" y="299">2C14</text>
        <text class="redt" x="855" y="284">剪力墙纵筋</text>
        <path class="arrowl" d="M893 281L930 300"/>
        <path class="arrowh" d="M939 305L921 303L927 293Z"/>
        <ellipse class="redring" cx="999" cy="336" rx="67" ry="42"/>
      </svg>
    </div>
    <div class="dstatus">
      <span class="ds1"><i class="l">(X: -77 Y: 541)</i></span>
      <span class="ds2">请指定起点所在纵筋或网格交点，按右键终止或<i class="l">ESC</i>键取消<b class="sgrip"></b></span>
    </div>
  </div>
</section>
</body>
</html>
```

FILE: styles.css
```css
* { box-sizing: border-box; }
html, body { margin: 0; padding: 0; }
body {
  width: 1366px; height: 768px; overflow: hidden; position: relative;
  display: flex; flex-direction: column;
  background: #f3f3f3; color: #111;
  font: 12px/16px "Noto Sans CJK SC", "Noto Sans", sans-serif;
}
i { font-style: normal; }
b { font-weight: normal; }
svg { display: block; flex: none; }
.sprite { position: absolute; width: 0; height: 0; }
.ic16 { width: 16px; height: 16px; }
.ic15 { width: 15px; height: 14px; }
.ic14 { width: 15px; height: 15px; }
.ic12 { width: 12px; height: 12px; }
.l { font: 10px/14px "DejaVu Sans Mono", monospace; }

/* title bar */
.titlebar { height: 23px; flex: none; background: #fff; display: flex; align-items: center; padding-left: 6px; color: #7a7a7a; font-size: 12.500px; white-space: nowrap; }
.tlogo { margin-right: 1px; }
.title-a { width: 567px; }
.title-b { font-size: 12.300px; }
.winctl { margin-left: auto; margin-right: 2px; display: flex; }
.wc { width: 46px; height: 12px; fill: none; stroke: #777; }

/* menu bar */
.menubar { height: 27px; flex: none; display: flex; align-items: center; padding-left: 7px; background: #f5f5f5; white-space: nowrap; position: relative; }
.m { margin-right: 10.600px; }
.m:nth-child(-n+4) { margin-right: 9.500px; }
.m:nth-child(5) { margin-right: 12.600px; }
.m:nth-child(11) { margin-right: 13px; }
.bdd { margin-right: 5px; }
.mi { margin-left: 8px; margin-right: 3px; }
.mi-a { margin-left: -2px; }
.mi2 { margin-left: 6px; margin-right: 3px; }
.dd { display: inline-block; flex: none; width: 0; height: 0; border: 3px solid transparent; border-top: 4px solid #222; border-bottom: 0; margin: 0 1px; }
.dd.gr { border-top-color: #777; }
.ask { width: 188px; height: 26px; margin-left: -2px; margin-right: -1px; background: #fbfbfb; color: #0d5f63; border-radius: 3px; display: flex; align-items: center; padding-left: 29px; }
.phone { margin-right: 6px; letter-spacing: .3px; }
.bean { margin-left: 6px; margin-right: 6px; }
.bell { width: 12px; height: 16px; }
.more { font: bold 14px/12px "DejaVu Sans", sans-serif; color: #222; margin-left: auto; align-self: flex-start; padding-top: 2px; }
.more-end { position: absolute; right: 4px; top: 3px; }

/* toolbars */
.tb1 { height: 28px; margin-top: 4px; flex: none; display: flex; gap: 2px; }
.grp { display: flex; align-items: center; height: 28px; background: linear-gradient(#fdfdfd, #ececec); border-radius: 0 5px 5px 0; flex: none; }
.g1 { width: 151px; padding: 0 7px; }
.g1 .dd { margin-left: 3px; }
.g1 .sep { margin: 0 7px 0 5px; }
.g2 { width: 545px; padding: 0 3px 0 4px; border-radius: 5px; }
.g3 { flex: 1; padding: 0 4px 0 5px; border-radius: 5px 0 0 5px; }
.g3 .t .dd { margin: 0 1px 0 5px; }
.g3 .sep { margin: 0 7px 0 -1px; }
.gap5 { margin-left: 5px; }
.gap10 { margin-left: 10px; }
.mr0 { margin-right: 0 !important; }
.mr2 { margin-right: 2px !important; }
.mr4 { margin-right: 4px !important; }
.sep { width: 1px; height: 22px; background: #b5b5b5; margin: 0 7px; flex: none; }
.t { display: inline-flex; align-items: center; gap: 4px; margin-right: 8px; white-space: nowrap; }
.off { color: #777; }
.sigma { font: bold 14px/16px "DejaVu Sans", sans-serif; width: 12px; margin-right: 4px; margin-left: 1px; }
.combo2d { width: 63px; height: 23px; border: 1px solid #777; display: flex; align-items: center; color: #888; margin-right: 4px; padding-left: 3px; flex: none; }
.sq { width: 13px; height: 13px; background: linear-gradient(#f5f5f5, #d8d8d8); border: 1px solid #ccc; margin-right: 3px; }
.combo2d .dd { margin-left: 9px; }

.workspace { height: 626px; flex: none; display: flex; }
.nav { width: 188px; margin-top: 2px; display: flex; flex-direction: column; flex: none; border-right: 1px solid #bbb; }
.navhead { height: 15px; border: 1px solid #aaa; border-left: 0; background: #f5f5f5; display: flex; align-items: center; justify-content: space-between; line-height: 13px; padding: 0 2px 0 0; flex: none; }
.navbtns { display: flex; gap: 9px; padding-right: 3px; }
.pin { width: 10px; height: 12px; }
.nbtn { height: 22px; margin: 1px 0 0 1px; line-height: 20px; text-align: center; background: #efefef; border: 1px solid #bdbdbd; flex: none; color: #222; }
.xbar { height: 27px; background: linear-gradient(#fff, #f0f0f0); margin-left: 2px; border: 1px solid #ddd; display: flex; align-items: center; gap: 7px; padding-left: 4px; flex: none; }
.xi { width: 16px; height: 14px; }
.treebox { height: 486px; margin-left: 2px; display: flex; background: #fff; border: 1px solid #aaa; border-top: 1px solid #888; border-bottom: 1px solid #888; padding-right: 1px; flex: none; overflow: hidden; }
.tree { flex: 1; overflow: hidden; }
.f, .c { height: 16px; display: flex; align-items: center; white-space: nowrap; }
.f { padding-left: 8px; }
.f svg { margin-right: 5px; }
.c { padding-left: 31px; background:
  linear-gradient(#888 50%, transparent 50%) 11px 0 / 1px 2px repeat-y,
  linear-gradient(#888 50%, transparent 50%) 31px 0 / 1px 2px repeat-y; }
.c svg { margin-right: 5px; }
.last { background: linear-gradient(#888 50%, transparent 50%) 11px 0 / 1px 2px repeat-y; }
.k { width: 12px; height: 8px; align-self: flex-start; border-bottom: 1px dotted #666; flex: none; }
.last .k { border-left: 1px dotted #666; }
.k2 { width: 3px; border-bottom: 1px dotted #666; flex: none; }
.chev { width: 10px; height: 10px; flex: none; margin-right: 6px; position: relative; display: block; }
.chev::before { content: ""; display: block; width: 6px; height: 6px; border-right: 2px solid #bbb; border-bottom: 2px solid #bbb; transform: rotate(-45deg); margin-top: 2px; }
.chev.open::before { border-color: #555; transform: rotate(45deg); margin-top: 0; }
.sel { background: #dcdcdc; padding: 0 2px 0 1px; margin-left: -1px; }
.vscroll { width: 15px; flex: none; display: flex; flex-direction: column; background: #f0f0f0; align-items: stretch; }
.sbtn { height: 18px; display: flex; align-items: center; justify-content: center; flex: none; }
.sbi { width: 9px; height: 7px; }
.sb-top { height: 25px; flex: none; }
.sb-thumb { height: 355px; background: #cdcdcd; flex: none; }
.sb-rest { flex: 1; }
.nbtn-b { margin-top: 2px; }

.right { flex: 1; margin-left: 6px; display: flex; flex-direction: column; min-width: 0; }
.tb2 { height: 27px; margin-top: 1px; display: flex; align-items: center; padding-left: 4px; background: linear-gradient(#fdfdfd, #ececec); flex: none; border-radius: 5px 0 0 5px; }
.tb2 .t { margin-right: 6px; }
.tb2 .t .dd { margin-left: -2px; }
.tb2 .sep { margin: 0 4px 0 2px; }
.floorlab { margin-right: 5px; }
.floorcombo { width: 63px; height: 27px; background: #fff; display: flex; align-items: center; justify-content: space-between; padding: 0 3px 0 0; margin-right: 2px; }
.tb2 .find { margin-left: 2px; }
.tb2 .off { gap: 5px; margin-right: 10px; }
.first-off { margin-left: 3px; }
.panes { flex: 1; display: flex; min-height: 0; }
.list { width: 184px; flex: none; display: flex; flex-direction: column; }
.searchrow { display: flex; height: 25px; margin-top: 7px; flex: none; padding-left: 1px; }
.searchbox { width: 160px; border: 1px solid #bbb; border-right: 0; color: #888; line-height: 22px; padding-left: 2px; background: #fff; }
.searchbtn { width: 23px; border: 1px solid #bbb; background: #fff; display: flex; align-items: center; justify-content: center; }
.listtree { height: 563px; background: #fff; border: 1px solid #9a9a9a; border-width: 1px 2px 2px 2px; flex: none; }
.lroot { height: 17px; display: flex; align-items: center; padding-left: 6px; }
.lroot svg { margin-right: 4px; }
.k3 { width: 4px; border-bottom: 1px dotted #666; }
.lroot .chev { margin-right: 3px; }
.lchild { height: 16px; display: flex; align-items: flex-start; padding-left: 24px; }
.k4 { width: 15px; height: 8px; border-left: 1px dotted #666; border-bottom: 1px dotted #666; }
.azsel { width: 51px; height: 16px; background: #2f6bbf; display: flex; align-items: center; padding-left: 3px; color: #fff; }
.az { margin-left: 8px; color: #fff; line-height: 16px; }

.props { flex: 1; margin-left: 3px; display: flex; flex-direction: column; min-width: 0; background: #fff; height: 595px; }
.tabs { height: 23px; flex: none; padding: 3px 0 0 1px; background: #f7f7f7; border-bottom: 1px solid #ccc; }
.tab { display: block; width: 63px; height: 20px; background: #fff; border: 1px solid #ddd; border-bottom: 0; line-height: 19px; padding-left: 6px; }
.sheet { flex: 1; margin: 0 5px 3px 4px; border-left: 1px solid #ccc; border-right: 1px solid #ccc; border-bottom: 1px solid #ccc; padding: 5px 0 0 1px; background: #fff; }

.grid { border-collapse: collapse; table-layout: fixed; width: 369px; }
.c1 { width: 20px; } .c2 { width: 191px; } .c3 { width: 126px; } .c4 { width: 32px; }
.grid th, .grid td { border: 1px solid #c4c4c4; padding: 0; height: 19px; line-height: 14px; font-weight: normal; white-space: nowrap; overflow: hidden; }
.grid thead tr { height: 22px; }
.grid th { height: 22px; background: linear-gradient(#fff, #ededed); text-align: center; }
.grid th.hval { background: linear-gradient(#fddca1, #f2bf63); color: #5c0a73; }
.grid .num { background: #f6f6f6; text-align: center; }
.grid .n { padding-left: 20px; }
.grid .v { padding-left: 2px; }
.blue { color: #0000ee; }
.gray { color: #888; }
.x { text-align: center; vertical-align: middle; }
.cb { display: block; width: 12px; height: 12px; margin: 0 auto; border: 1px solid #333; background: #fff; }
.grid .selrow .num { background: #ffd89a; color: #5c0a73; }
.selrow .n { background: #0078d7; color: #fff; }
.selrow .v { background: #d8e8f7; }
.grid .rbv { font: 10px/14px "Noto Sans", sans-serif; }
.rb { display: inline-block; width: 10px; height: 10px; margin: 0 2px; vertical-align: -1px; }
.grid .g { padding-left: 3px; }
.pm { display: inline-block; width: 12px; height: 12px; margin-right: 6px; vertical-align: -2px; border: 1px solid #aaa; background: linear-gradient(#111, #111) center / 6px 1px no-repeat; }
.plus { background: linear-gradient(#111, #111) center / 6px 1px no-repeat, linear-gradient(#111, #111) center / 1px 6px no-repeat; }
.tr0 { background: linear-gradient(#aaa, #aaa) 9px 100% / 1px 5px no-repeat; }
.grid .s { padding-left: 30px; background:
  linear-gradient(#aaa, #aaa) 9px 0 / 1px 100% no-repeat,
  linear-gradient(#aaa, #aaa) 9px 50% / 16px 1px no-repeat; }
.grid .send { background:
  linear-gradient(#aaa, #aaa) 9px 0 / 1px 50% no-repeat,
  linear-gradient(#aaa, #aaa) 9px 50% / 16px 1px no-repeat; }

/* status bar */
.statusbar { height: 19px; flex: none; display: flex; gap: 2px; background: #f3f3f3; }
.st { border: 1px solid #dcdcdc; background: linear-gradient(#fbfbfb, #f3f3f3); display: flex; align-items: center; padding-left: 2px; line-height: 16px; }
.st1 { width: 148px; } .st2 { width: 78px; } .st3 { width: 98px; } .st4 { width: 48px; } .st5 { width: 915px; } .st6 { flex: 1; }

/* taskbar */
.taskbar { height: 41px; flex: none; background: #04111a; display: flex; align-items: stretch; color: #fff; }
.start { width: 48px; background: #000; display: flex; align-items: center; justify-content: center; flex: none; }
.tk18 { width: 18px; height: 18px; }
.tsearch { width: 344px; background: #333; display: flex; align-items: center; padding-left: 11px; flex: none; }
.cortana { width: 19px; height: 19px; border-radius: 50%; border: 3px solid #e8e8e8; flex: none; margin-right: 6px; }
.tstext { color: #8b8b8b; font-size: 14px; width: 280px; }
.tmic { width: 14px; height: 22px; }
.tpins { display: flex; margin-left: 2px; width: 516px; flex: none; }
.tk { width: 49px; display: flex; align-items: center; justify-content: center; position: relative; flex: none; }
.run { border-bottom: 2px solid #76b9ed; margin: 0 2px 0 3px; width: 44px; padding-top: 2px; }
.act { background: #2d3b45; width: 49px; margin: 0; }
.tk24 { width: 24px; height: 24px; }
.tsep { width: 2px; height: 24px; background: #3a444a; align-self: center; margin: 0 10px 0 14px; flex: none; }
.tray { flex: 1; display: flex; align-items: stretch; margin-left: 84px; }
.cpu { width: 60px; display: flex; flex-direction: column; align-items: center; justify-content: center; line-height: 15px; flex: none; margin-right: 8px; }
.cpu1 { margin-bottom: 1px; }
.tc { width: 24px; display: flex; align-items: center; justify-content: center; flex: none; font-size: 15px; }
.tc16 { width: 16px; height: 16px; }
.tcnv { width: 16px; height: 22px; }
.tcs { margin-left: 4px; }
.clock { width: 82px; display: flex; flex-direction: column; align-items: center; justify-content: center; line-height: 17px; flex: none; }
.notif { width: 34px; display: flex; align-items: center; justify-content: center; flex: none; }
.tnote { width: 18px; height: 20px; }

/* floating */
.sogou { display: flex; align-items: center; justify-content: center; width: 22px; height: 22px; border-radius: 3px; background: #ee4d1f; color: #fff; font: bold 18px/22px "Liberation Sans", sans-serif; transform: rotate(-10deg); }
.sogou.small { width: 16px; height: 17px; font-size: 14px; }
.imebar { position: absolute; left: 405px; top: 5px; width: 185px; height: 23px; background: #f7fbff; border: 1px solid #c3d3e3; display: flex; align-items: center; padding-left: 3px; }
.imez2 { color: #1c6fc4; font: bold 14px/20px "Noto Sans CJK SC", sans-serif; margin-left: 9px; }
.imep { color: #1c6fc4; font: bold 13px/14px "DejaVu Sans", sans-serif; margin-left: 8px; width: 15px; }
.imi1 { width: 12px; height: 18px; margin-left: 9px; }
.imi2 { width: 16px; height: 14px; margin-left: 8px; }
.imi3 { width: 16px; height: 16px; margin-left: 8px; }
.imi4 { width: 14px; height: 14px; margin-left: 5px; }
.imi5 { width: 16px; height: 16px; margin-left: 7px; }
.ball { position: absolute; left: 1184px; top: -26px; width: 44px; height: 44px; border-radius: 50%; background: radial-gradient(circle at 50% 40%, #4cc25a, #2f9e3f); box-shadow: 0 1px 3px rgba(0,0,0,.45); color: #fff; font: bold 13px/14px "Liberation Sans", sans-serif; display: flex; align-items: flex-end; justify-content: center; padding-bottom: 4px; }
.marks { position: absolute; left: 0; top: 0; width: 1366px; height: 768px; pointer-events: none; }
.marks ellipse { fill: none; stroke: #e60012; stroke-width: 3; }

/* dialog */
.dialog { position: absolute; left: 805px; top: 126px; width: 499px; height: 570px; border: 1px solid #333c44; background: linear-gradient(#9cb8d6, #bcd3ea 36px, #b9d1ea); display: flex; flex-direction: column; padding: 0 7px 6px; }
.dtitle { height: 30px; flex: none; line-height: 36px; }
.dbody { flex: 1; background: #f0f0f0; border: 1px solid #fff; display: flex; flex-direction: column; padding-top: 5px; min-height: 0; }
.dbar { margin: 0 3px; background: linear-gradient(#fdfdfd, #ececec); display: flex; align-items: center; border-radius: 4px; flex: none; padding-bottom: 1px; }
.dbar1 { height: 26px; margin-bottom: 2px; }
.dbar2 { height: 28px; margin-bottom: 1px; }
.dbar3 { height: 27px; margin-bottom: 2px; }
.grip { width: 2px; height: 14px; margin: 0 2px 0 4px; background: repeating-linear-gradient(#aaa 0 2px, transparent 2px 4px); flex: none; }
.db { height: 23px; line-height: 21px; padding: 0 4px; border: 1px solid transparent; white-space: nowrap; display: flex; align-items: center; }
.on { border-color: #1a7fc9; background: #e6f0f9; }
.dsep { margin: 0 2px 0 3px; height: 20px; }
.arc .dd { margin-left: 6px; }
.dcombo { width: 58px; height: 23px; border: 1px solid #888; background: #fff; display: flex; align-items: center; justify-content: flex-end; padding-right: 3px; }
.lbl { margin-left: 3px; margin-right: 1px; }
.rcombo { width: 135px; height: 25px; border: 1px solid #0078d7; background: #fff; display: flex; align-items: center; justify-content: space-between; }
.rtext { padding-left: 2px; font: 12.500px/20px "Liberation Sans", sans-serif; }
.rbtn { width: 12px; height: 23px; background: #dce8f4; display: flex; align-items: center; justify-content: center; }
.canvas { height: 413px; margin: 0 3px 0 4px; border: 2px solid #ff0000; background: #000; flex: none; }
.draw { width: 469px; height: 409px; }
.gridl { fill: none; stroke: #4c4c4c; stroke-dasharray: 12 4 3 4; shape-rendering: crispEdges; }
.gridc { fill: none; stroke: #6a6a6a; stroke-dasharray: 12 4 3 4; shape-rendering: crispEdges; }
.axis { fill: #3c3c3c; font: 11px "Liberation Mono", monospace; }
.wall { fill: none; stroke: #fff; stroke-width: 2; shape-rendering: crispEdges; }
.hoop path, .hoop rect { fill: none; stroke: #f00000; stroke-width: 4.500; stroke-linejoin: round; }
.dot { fill: none; stroke-width: 1.200; }
.dy { stroke: #e8e800; }
.dc { stroke: #20d8e8; }
.dm { stroke: #e020e0; }
.dim { fill: none; stroke: #00f000; shape-rendering: crispEdges; }
.lead { fill: none; stroke: #fff; }
.dimt { fill: #fff; font: 14px "Liberation Sans", sans-serif; letter-spacing: .2px; }
.cn { fill: #fff; font: 14px/16px "Noto Sans CJK SC", sans-serif; }
.gn { fill: #00e800; font: 13px "DejaVu Sans Mono", monospace; }
.redt { fill: #f00000; font: bold 22.500px "Noto Sans CJK SC", sans-serif; }
.arrowl { fill: none; stroke: #f00000; stroke-width: 2.500; }
.arrowh { fill: #f00000; }
.redring { fill: none; stroke: #f00000; stroke-width: 3; }
.dstatus { display: flex; gap: 3px; height: 20px; margin-top: 6px; flex: none; }
.ds1 { width: 147px; border: 1px solid #ddd; background: #f3f3f3; padding-left: 8px; line-height: 18px; }
.ds2 { flex: 1; border: 1px solid #ddd; background: #f7f7f7; padding-left: 1px; line-height: 18px; white-space: nowrap; display: flex; align-items: center; position: relative; }
.sgrip { position: absolute; right: 1px; bottom: 1px; width: 9px; height: 9px; background: radial-gradient(#aaa 1px, transparent 1px) 0 0 / 3px 3px; }
```
